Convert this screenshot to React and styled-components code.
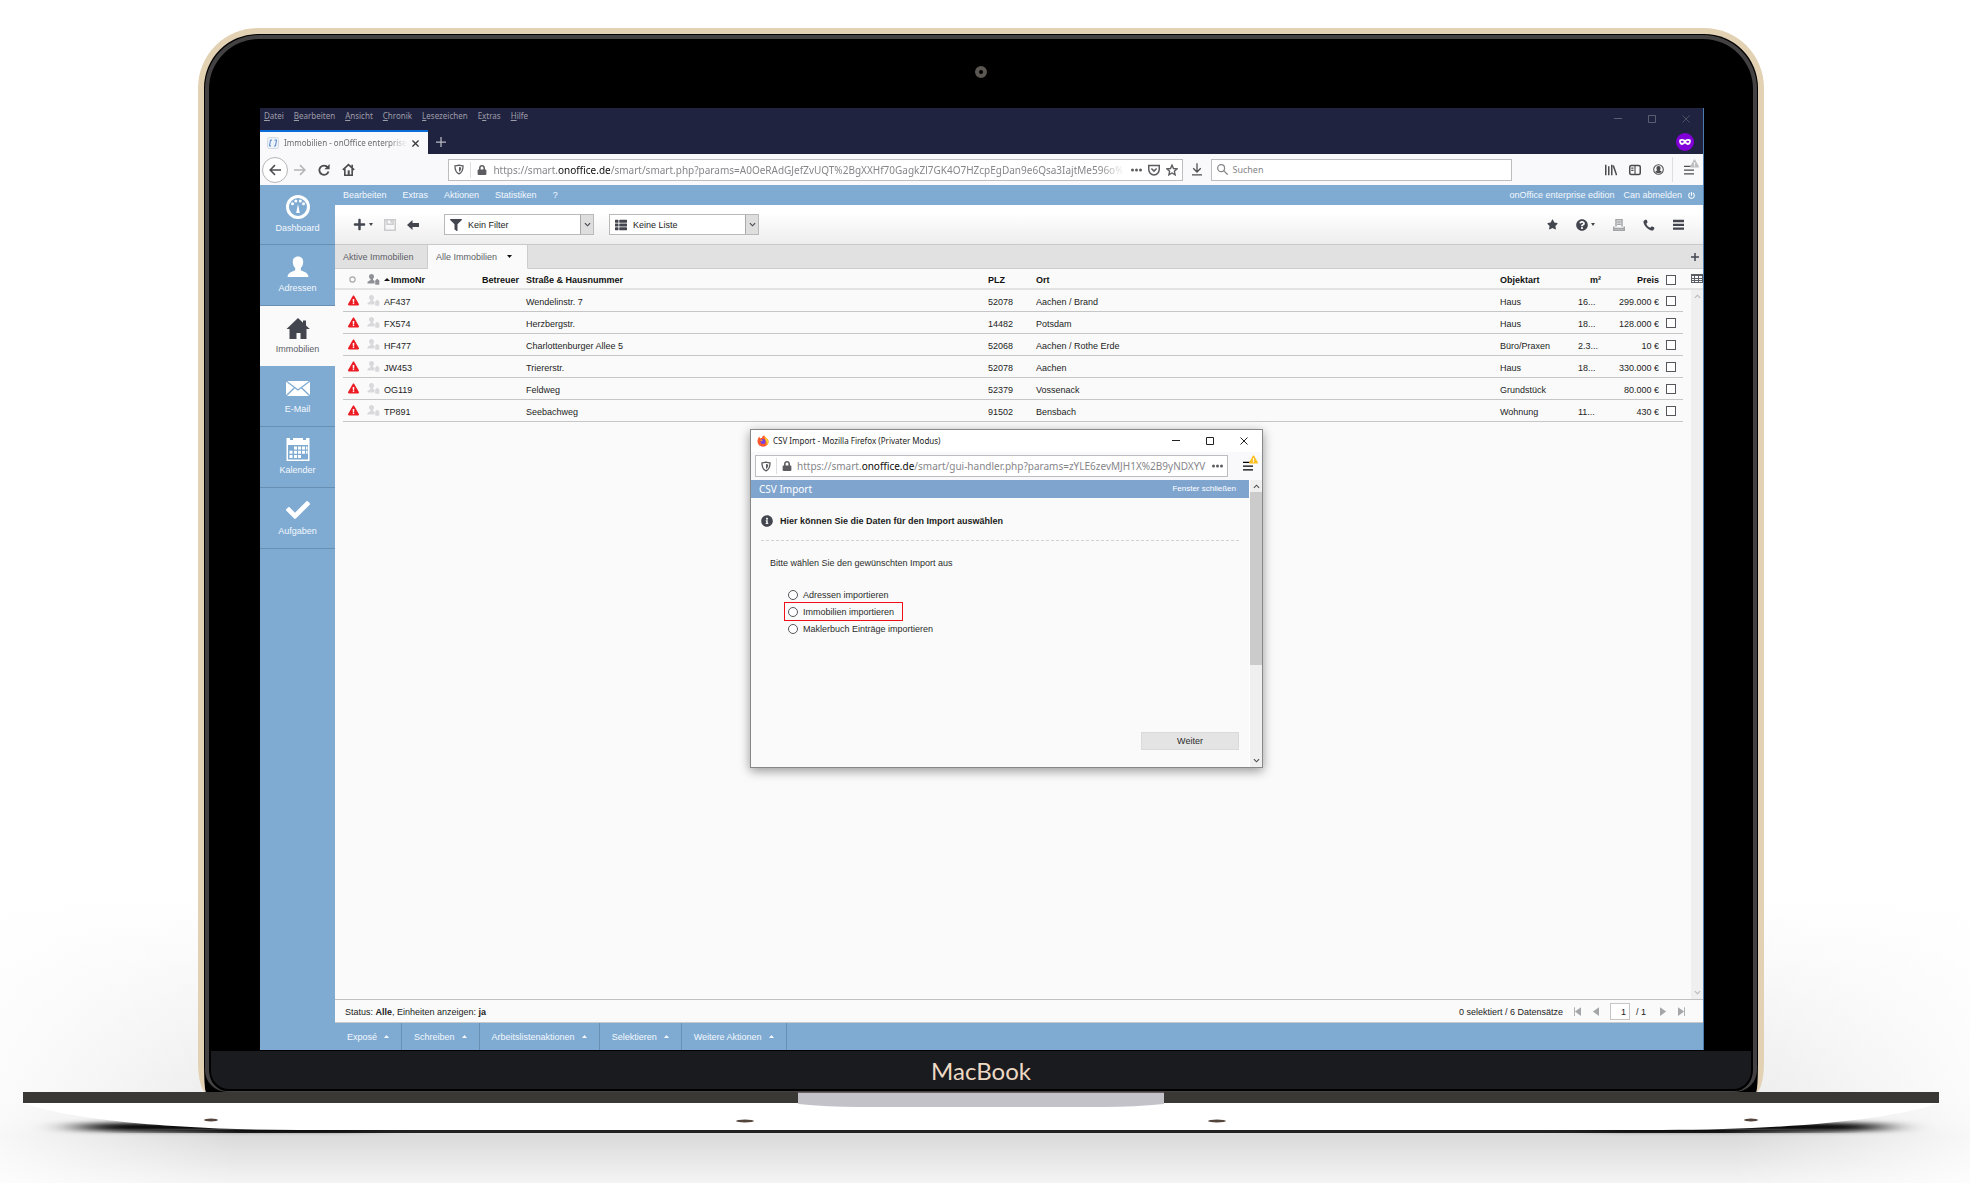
import styled, { createGlobalStyle, css } from "styled-components"
import {
   FaCheck,
   FaExclamationTriangle,
   FaFilter,
   FaInfoCircle,
   FaLock,
   FaPlus,
   FaPowerOff,
   FaQuestionCircle,
   FaStar,
   FaThList,
} from "react-icons/fa"

const colors = {
   blue: "#7fabd3",
   blueLine: "#6890b5",
   navy: "#20233f",
   dark: "#43464f",
   panel: "#fafafa",
   chrome: "#f9f9fb",
   line: "#c6c6c6",
   gold: "#e2d2b3",
}
const fonts = {
   app: `"Liberation Sans", Arial, sans-serif`,
   system: `"Noto Sans", "Open Sans", sans-serif`,
}

const GlobalStyle = createGlobalStyle`
   * {
      box-sizing: border-box;
   }
   body {
      margin: 0;
      background: #fff;
      font-family: ${fonts.app};
      font-size: 9px;
      line-height: 12px;
   }
   button, input, select {
      font: inherit;
      color: inherit;
      margin: 0;
   }
   svg {
      display: block;
      flex: none;
   }
`
const bareButton = css`
   border: 0;
   padding: 0;
   background: none;
   display: flex;
   align-items: center;
   justify-content: center;
   cursor: pointer;
`

/* ---------- laptop ---------- */
const Page = styled.div`
   min-height: 100vh;
   display: flex;
   flex-direction: column;
   padding-top: 28px;
   background:
      linear-gradient(90deg, rgba(255, 255, 255, 0.8), transparent 12%, transparent 88%, rgba(255, 255, 255, 0.8)),
      linear-gradient(#fff 76%, #ececec 93%, #e4e4e4 95%, #dadada 96%, #f4f4f4);
`
const Lid = styled.div`
   flex: 1;
   display: flex;
   flex-direction: column;
   margin: 0 206px 0 198px;
   padding: 1px 1px 0;
   border: 6px solid ${colors.gold};
   border-bottom: 0;
   border-radius: 60px 60px 8px 8px / 60px 60px 30px 30px;
   background: #000;
`
const Bezel = styled.div`
   flex: 1;
   display: flex;
   flex-direction: column;
   border: 4px solid #434142;
   border-bottom-width: 1px;
   border-radius: 54px 54px 22px 22px;
   background: #000;
`
const CameraBar = styled.div`
   height: 69px;
   padding-bottom: 3px;
   display: flex;
   align-items: center;
   justify-content: center;
`
const Camera = styled.div`
   width: 12px;
   height: 12px;
   border: 4px solid #5b5753;
   border-radius: 50%;
`
const Screen = styled.main`
   flex: 1;
   display: flex;
   flex-direction: column;
   position: relative;
   margin: 0 49px 0 51px;
   border-right: 1px solid #4a7cae;
   background: ${colors.panel};
`
const Chin = styled.div`
   height: 38px;
   margin: 1px 2px 2px;
   padding-top: 2px;
   display: flex;
   align-items: center;
   justify-content: center;
   border-radius: 0 0 18px 18px;
   background: #1a1b1f;
   color: #eed9c4;
   font-family: Lato, sans-serif;
   font-size: 24px;
   line-height: 30px;
`
const BaseDrawing = styled.svg`
   width: 100%;
   height: 91px;
`

/* ---------- browser ---------- */
const TitleArea = styled.header`
   height: 46px;
   display: flex;
   justify-content: space-between;
   background: ${colors.navy};
   font-family: ${fonts.system};
   font-size: 8px;
`
const TitleLeft = styled.div`
   display: flex;
   flex-direction: column;
   justify-content: space-between;
`
const MenuBar = styled.nav`
   display: flex;
   gap: 10px;
   padding: 2px 4px 0;
   color: #9d9ca9;
`
const MenuButton = styled.button`
   ${bareButton}
   white-space: pre;
`
const TabRow = styled.div`
   display: flex;
   align-items: center;
   gap: 8px;
   color: #b9bac4;
`
const BrowserTab = styled.div`
   width: 168px;
   height: 24px;
   display: flex;
   align-items: center;
   gap: 5px;
   padding: 0 9px 0 7px;
   border-top: 2px solid #0a6cd6;
   background: ${colors.chrome};
   color: #6b6b70;
`
const TabTitle = styled.span`
   flex: 1;
   overflow: hidden;
   white-space: nowrap;
   mask-image: linear-gradient(90deg, #000 85%, transparent);
`
const TitleRight = styled.div`
   display: flex;
   flex-direction: column;
   align-items: flex-end;
   justify-content: space-between;
   padding: 7px 9px 3px 0;
   color: #5b5d70;
`
const WindowButtons = styled.div`
   display: flex;
   align-items: center;
   gap: 26px;
   padding-right: ${(p) => p.$end}px;
`
const NavBar = styled.div`
   height: 31px;
   display: flex;
   align-items: center;
   padding: 0 4px 0 2px;
   background: ${colors.chrome};
   color: #4c4c50;
`
const NavGroup = styled.div`
   display: flex;
   align-items: center;
   gap: ${(p) => p.$gap}px;
`
const BackButton = styled.button`
   ${bareButton}
   width: 26px;
   height: 26px;
   border: 1px solid #b5b5b8;
   border-radius: 50%;
   background: #fff;
`
const IconButton = styled.button`
   ${bareButton}
   color: ${(p) => p.$color || "inherit"};
`
const DownloadButton = styled(IconButton)`
   padding: 0 9px;
`
const Spacer = styled.div`
   flex: 1 1 93px;
`
const AddressField = styled.div`
   flex: ${(p) => p.$flex || "8 1 732px"};
   min-width: 0;
   height: 22px;
   display: flex;
   align-items: center;
   gap: 6px;
   padding: 0 4px 0 5px;
   border: 1px solid #bdbdc0;
   background: #fff;
   color: #5c5c60;
`
const DialogAddress = styled(AddressField)`
   gap: 5px;
`
const AddressText = styled.div`
   flex: 1;
   min-width: 0;
   overflow: hidden;
   white-space: nowrap;
   font-family: ${fonts.system};
   font-size: 10px;
   line-height: 16px;
   color: #86868a;
   mask-image: ${(p) => (p.$fade ? "linear-gradient(90deg, #000 96%, transparent)" : "none")};
   & b {
      font-weight: 400;
      color: #0c0c0d;
   }
`
const Divider = styled.i`
   width: 1px;
   height: ${(p) => p.$height}px;
   background: #dedee0;
`
const SearchField = styled.label`
   flex: 3 1 299px;
   min-width: 0;
   height: 22px;
   display: flex;
   align-items: center;
   gap: 4px;
   padding: 0 5px;
   border: 1px solid #bdbdc0;
   background: #fff;
   color: #85858a;
   font-family: ${fonts.system};
   & input {
      width: 100%;
      border: 0;
      padding: 0;
      background: none;
      outline: 0;
   }
   & input::placeholder {
      color: #85858a;
   }
`
const MenuWithBadge = styled.button`
   ${bareButton}
   position: relative;
   width: 20px;
   height: 22px;
`
const WarnBadge = styled(FaExclamationTriangle)`
   position: absolute;
   top: 0;
   right: 0;
   color: ${(p) => p.$color};
`

/* ---------- application ---------- */
const AppArea = styled.div`
   flex: 1;
   display: flex;
`
const Sidebar = styled.nav`
   width: 75px;
   background: ${colors.blue};
`
const SideLink = styled.a`
   height: ${(p) => (p.$active ? 60 : 61)}px;
   display: flex;
   flex-direction: column;
   align-items: center;
   gap: 3px;
   padding-top: 10px;
   border-bottom: 1px solid ${(p) => (p.$active ? colors.panel : colors.blueLine)};
   background: ${(p) => (p.$active ? colors.panel : "transparent")};
   color: ${(p) => (p.$active ? "#5c5e66" : "#f4f8fc")};
   text-decoration: none;
   &:first-child {
      height: 60px;
   }
   & svg {
      width: 24px;
      height: 24px;
      color: ${(p) => (p.$active ? colors.dark : "#fff")};
   }
`
const Content = styled.section`
   flex: 1;
   min-width: 0;
   display: flex;
   flex-direction: column;
`
const AppMenu = styled.div`
   height: 20px;
   display: flex;
   align-items: center;
   gap: 16px;
   padding: 0 8px;
   background: ${colors.blue};
   color: #f4f8fc;
`
const MenuEnd = styled.div`
   margin-left: auto;
   display: flex;
   align-items: center;
   gap: 9px;
`
const LogoutButton = styled(MenuButton)`
   gap: 6px;
`
const Toolbar = styled.div`
   height: 39px;
   display: flex;
   align-items: center;
   justify-content: space-between;
   padding: 0 19px 0 18px;
   background: linear-gradient(#fff 20%, #ededed);
   color: ${colors.dark};
`
const ToolGroup = styled.div`
   display: flex;
   align-items: center;
   gap: ${(p) => p.$gap}px;
`
const CaretButton = styled(IconButton)`
   gap: 3px;
`
const SelectBox = styled.label`
   width: 150px;
   height: 21px;
   display: flex;
   align-items: center;
   gap: 6px;
   padding-left: 5px;
   border: 1px solid #b9b9b9;
   background: #fff;
   & select {
      flex: 1;
      min-width: 0;
      border: 0;
      padding: 0;
      appearance: none;
      background: none;
      color: #1d1d1d;
   }
`
const SelectArrow = styled.span`
   width: 13px;
   height: 19px;
   display: flex;
   align-items: center;
   justify-content: center;
   border-left: 1px solid #a9a9a9;
   background: #dedede;
`
const ViewTabs = styled.div`
   height: 25px;
   display: flex;
   border-top: 1px solid #c9c9c9;
   background: #e1e1e1;
   color: ${colors.dark};
`
const ViewTab = styled.button`
   ${bareButton}
   gap: 10px;
   width: ${(p) => (p.$active ? 100 : 93)}px;
   justify-content: flex-start;
   padding: 0 8px;
   border-right: 1px solid #cdcdcd;
   border-bottom: 1px solid ${(p) => (p.$active ? colors.panel : "#cdcdcd")};
   background: ${(p) => (p.$active ? colors.panel : "transparent")};
   color: #5c5e66;
   & svg {
      color: #111;
   }
`
const ViewTabsEnd = styled.div`
   flex: 1;
   display: flex;
   align-items: center;
   justify-content: flex-end;
   padding-right: 4px;
   border-bottom: 1px solid #cdcdcd;
`
const ListArea = styled.div`
   flex: 1;
   display: flex;
   background: linear-gradient(#e3e3e3, #e3e3e3) 0 19px / 100% 2px no-repeat ${colors.panel};
`
const TableWrap = styled.div`
   flex: 1;
   min-width: 0;
   padding: 0 8px;
`
const Table = styled.table`
   width: 100%;
   table-layout: fixed;
   border-collapse: separate;
   border-spacing: 0;
   color: #1d1d1d;
   & th {
      height: 21px;
      padding: 0;
      text-align: left;
      color: #111;
   }
   & td {
      height: 22px;
      padding: 2px 0 0;
      border-bottom: 1px solid ${colors.line};
   }
   & th,
   & td {
      white-space: nowrap;
   }
`
const Cell = styled.td`
   && {
      text-align: ${(p) => (p.$end ? "right" : "left")};
      padding-left: ${(p) => p.$pad || 0}px;
   }
`
const IconCell = styled(Cell)`
   && {
      padding-top: 0;
   }
`
const HeadCell = styled(Cell).attrs({ as: "th", scope: "col" })``
const SortLabel = styled.span`
   display: flex;
   align-items: center;
   gap: 1px;
`
const Tick = styled.input.attrs({ type: "checkbox" })`
   && {
      display: block;
      width: 10px;
      height: 10px;
      appearance: none;
      border: 1px solid #55575c;
      background: #fff;
   }
   &&:checked {
      background: ${colors.dark};
   }
`
const ListSide = styled.div`
   width: 12px;
   display: flex;
   flex-direction: column;
`
const ColumnsButton = styled.button`
   ${bareButton}
   height: 19px;
   margin-bottom: 2px;
   color: #5c5e66;
`
const ScrollTrack = styled.div`
   flex: 1;
   display: flex;
   flex-direction: column;
   justify-content: space-between;
   align-items: center;
   padding: 4px 0;
   background: #efefef;
   color: #b8b8b8;
`
const DialogScroll = styled(ScrollTrack)`
   flex: 0 0 13px;
   border-left: 1px solid #fff;
   color: #505050;
`
const ScrollThumb = styled.i`
   width: 100%;
   height: 173px;
   margin: 3px 0 auto;
   background: #cbcbcb;
`
const StatusBar = styled.div`
   height: 24px;
   display: flex;
   align-items: center;
   justify-content: space-between;
   padding: 1px 18px 0 10px;
   border-top: 1px solid #c0c0c0;
   border-bottom: 1px solid #c9c9c9;
   background: ${colors.panel};
   color: #222;
`
const Pager = styled.div`
   display: flex;
   align-items: center;
   gap: 11px;
   color: #222;
   & input {
      width: 20px;
      height: 17px;
      padding: 0 3px 0 0;
      border: 1px solid #c6c6c6;
      background: #fff;
      text-align: right;
   }
`
const PagerField = styled.label`
   display: flex;
   align-items: center;
   gap: 6px;
   margin-right: 3px;
`
const Footer = styled.footer`
   height: 27px;
   display: flex;
   background: ${colors.blue};
   color: #f4f8fc;
`
const FooterButton = styled.button`
   ${bareButton}
   gap: 7px;
   padding: 0 12px;
   border-right: 1px solid ${colors.blueLine};
`

/* ---------- import window ---------- */
const Dialog = styled.section`
   position: absolute;
   top: 321px;
   left: 490px;
   width: 513px;
   height: 339px;
   display: flex;
   flex-direction: column;
   border: 1px solid #86888a;
   background: ${colors.panel};
   box-shadow: 0 3px 10px rgba(0, 0, 0, 0.4);
`
const DialogTitle = styled.header`
   height: 22px;
   display: flex;
   align-items: center;
   gap: 4px;
   padding-left: 6px;
   background: #fff;
   color: #222;
   font-family: ${fonts.system};
   font-size: 8px;
   & h1 {
      flex: 1;
      margin: 0;
      font-size: inherit;
      font-weight: 400;
   }
`
const DialogNav = styled.div`
   height: 28px;
   display: flex;
   align-items: center;
   gap: 10px;
   padding: 0 4px;
   background: ${colors.chrome};
`
const DialogMain = styled.div`
   flex: 1;
   display: flex;
   min-height: 0;
`
const DialogForm = styled.form`
   flex: 1;
   display: flex;
   flex-direction: column;
`
const DialogHeading = styled.div`
   height: 18px;
   display: flex;
   align-items: center;
   justify-content: space-between;
   padding: 0 13px 0 8px;
   background: #7fa5cf;
   color: #fff;
   font-size: 8px;
   & h2 {
      margin: 0;
      font-family: ${fonts.system};
      font-weight: 400;
      font-size: 10px;
   }
   & a {
      color: inherit;
      text-decoration: none;
   }
`
const Hint = styled.div`
   height: 43px;
   display: flex;
   align-items: center;
   gap: 7px;
   margin: 0 10px;
   padding-top: 3px;
   border-bottom: 1px dashed #d2d2d2;
   color: ${colors.dark};
   & strong {
      color: #1a1a1a;
   }
`
const Choices = styled.fieldset`
   flex: 1;
   display: flex;
   flex-direction: column;
   align-items: flex-start;
   margin: 0;
   padding: 16px 0 0 33px;
   border: 0;
   color: #2c2c2c;
   & legend {
      padding: 16px 0 0;
      margin-left: -14px;
   }
`
const Choice = styled.label`
   height: 19px;
   display: flex;
   align-items: center;
   gap: 5px;
   margin-bottom: -2px;
   padding: 0 8px 0 3px;
   border: 1px solid ${(p) => (p.$marked ? "#f00f17" : "transparent")};
   & input {
      width: 10px;
      height: 10px;
      appearance: none;
      border: 1px solid #55575c;
      border-radius: 50%;
      background: #fff;
   }
   & input:checked {
      border-width: 4px;
   }
`
const SubmitButton = styled.button`
   align-self: flex-end;
   width: 98px;
   height: 18px;
   margin: 0 10px 17px 0;
   border: 1px solid #dadada;
   background: #e4e4e4;
   color: #2c2c2c;
`

/* ---------- icons ---------- */
const Line = ({ w = 12, h = w, box = "0 0 16 16", sw = 2, children }) => (
   <svg width={w} height={h} viewBox={box} fill="none" stroke="currentColor" strokeWidth={sw} aria-hidden="true">
      {children}
   </svg>
)
const Close = ({ size = 8, sw = 2 }) => (
   <Line w={size} sw={sw}>
      <path d="M1 1l14 14M15 1L1 15" />
   </Line>
)
const Maximize = () => (
   <Line w={8}>
      <path d="M1 1h14v14H1z" />
   </Line>
)
const Minimize = () => (
   <Line w={8}>
      <path d="M0 7h16" />
   </Line>
)
const Shield = () => (
   <Line w={10} h={11}>
      <path d="M8 1c2 .6 4 1 6.500 1C14.500 9 13 13 8 15 3 13 1.500 9 1.500 2 4 2 6 1.600 8 1z" />
      <path d="M8 4c1 .4 2.300.6 3.500.7-.2 4-1.200 6-3.500 7.300z" fill="currentColor" stroke="none" />
   </Line>
)
const Dots = () => (
   <svg width="11" height="4" viewBox="0 0 11 4" fill="currentColor" aria-hidden="true">
      <circle cx="1.500" cy="2" r="1.500" />
      <circle cx="5.500" cy="2" r="1.500" />
      <circle cx="9.500" cy="2" r="1.500" />
   </svg>
)
const Hamburger = () => (
   <Line w={10}>
      <path d="M0 2h16M0 8h16M0 14h16" />
   </Line>
)
const Caret = ({ up, w = 5 }) => (
   <svg width={w} height="3" viewBox="0 0 6 4" preserveAspectRatio="none" fill="currentColor" aria-hidden="true">
      <path d={up ? "M0 4l3-4 3 4z" : "M0 0h6l-3 4z"} />
   </svg>
)
const Chevron = ({ up }) => (
   <Line w={7} h={5} box="0 0 8 5" sw={1.3}>
      <path d={up ? "M1 4l3-3 3 3" : "M1 1l3 3 3-3"} />
   </Line>
)
const PageArrow = ({ back, stop }) => (
   <svg width="7" height="9" viewBox="0 0 8 10" fill="#a4a6a9" aria-hidden="true">
      <path d={back ? "M8 0v10L1 5z" : "M0 0v10l7-5z"} />
      {stop && <path d={back ? "M0 0h1v10H0z" : "M7 0h1v10H7z"} />}
   </svg>
)
const PersonHouse = ({ color = "#d9d9dc" }) => (
   <svg width="13" height="11" viewBox="0 0 26 22" fill={color} aria-hidden="true">
      <path d="M9 0c3 0 5 2 5 5 0 2-1 4-2 5v2l3 1.500V19H1v-3c1-2 4-2 6-4v-2C5 9 4 7 4 5c0-3 2-5 5-5z" />
      <path d="M20.500 9l5.500 6h-1.500v6.500h-8V15H15z" />
   </svg>
)
const ColumnsIcon = () => (
   <svg width="12" height="9" viewBox="0 0 12 9" fill="currentColor" aria-hidden="true">
      <path d="M0 0h12v9H0zM1 2v2h2V2zM4 2v2h3V2zM8 2v2h3V2zM1 5v1h2V5zM4 5v1h3V5zM8 5v1h3V5zM1 7v1h2V7zM4 7v1h3V7zM8 7v1h3V7z" fillRule="evenodd" />
   </svg>
)
const DashboardIcon = () => (
   <svg viewBox="0 0 24 24" fill="currentColor" aria-hidden="true">
      <circle cx="12" cy="12" r="10.500" fill="none" stroke="currentColor" strokeWidth="3" />
      <circle cx="6.500" cy="8.800" r="1.500" />
      <circle cx="9.800" cy="6" r="1.500" />
      <circle cx="14.300" cy="6" r="1.500" />
      <circle cx="17.500" cy="8.800" r="1.500" />
      <path d="M12 9l1.800 9h-3.600z" />
   </svg>
)
const PersonIcon = () => (
   <svg viewBox="0 0 24 24" fill="currentColor" aria-hidden="true">
      <path d="M12 1.500c3.500 0 5.200 2.300 5.200 5.500 0 2.500-1 4.500-2.400 6v2.300c2.500 1.200 7 2 7.700 6.700h-21c.7-4.700 5.200-5.500 7.700-6.700V13C7.800 11.500 6.800 9.500 6.800 7c0-3.200 1.700-5.500 5.200-5.500z" />
   </svg>
)
const HouseIcon = () => (
   <svg viewBox="0 0 24 24" fill="currentColor" aria-hidden="true">
      <path d="M12 2l5 4.700V4.500h3v5l3.800 3.600H20.500V23h-6v-6h-4v6h-7v-9.900H.5z" />
   </svg>
)
const MailIcon = () => (
   <svg viewBox="0 0 24 24" aria-hidden="true">
      <path d="M0 5h24v15H0z" fill="currentColor" />
      <path d="M0 5l12 9 12-9M0 20l8.500-8.300M24 20l-8.500-8.300" fill="none" stroke={colors.blue} strokeWidth="1.300" />
   </svg>
)
const CalendarIcon = () => (
   <svg viewBox="0 0 24 24" fill="currentColor" aria-hidden="true">
      <path d="M.5 1H4v2h3V1h10v2h3V1h3.500v23H.5zM2 8v14.500h20V8z" fillRule="evenodd" />
      {[8, 12, 16].map((x) => (
         <path key={x} d={`M${x} 9.500h3v3h-3zM${x} 13.700h3v3h-3z`} />
      ))}
      <path d="M20 9.500h1.500v3H20zM20 13.700h1.500v3H20zM3.500 13.700h3v3h-3zM3.500 18h3v3h-3zM8 18h3v3H8zM12 18h3v3h-3z" />
   </svg>
)
const HomeOutline = () => (
   <Line w={13}>
      <path d="M1 8.500L8 2l7 6.500M3.500 7v8h9V7" />
      <path d="M7 9h2.500v6H7z" fill="currentColor" stroke="none" />
      <path d="M12.500 5.500V2" />
   </Line>
)
const FirefoxLogo = () => (
   <svg width="12" height="12" viewBox="0 0 24 24" aria-hidden="true">
      <path d="M12 23C5.500 23 1 18.500 1 12.500 1 8 3 5 5 3c0 2 .5 3 1.500 4 1-.7 2-1 3.500-1 .5-2.500 2-4.500 4.500-5.500 0 2.500 2 3.500 4 5.500 2.500 1.500 4.500 4 4.500 7.500C23 19 18 23 12 23z" fill="#ff5a2a" />
      <path d="M14.500.5c0 2.500 2 3.500 4 5.500 2.500 1.500 4.500 4 4.500 7.500 0 3-1.500 5.500-3.500 7.200C20 13 15 9 14.500.5z" fill="#ffc72e" />
      <path d="M3 16c2 5 7 7.500 12 6.500-3 .8-10 1-12-6.500z" fill="#e31587" />
      <circle cx="12" cy="13" r="5" fill="#7542e5" />
      <path d="M6.500 10c2-1 4-.5 6 .5-2 .2-2.500 1.500-4 2.500z" fill="#ff9a2a" />
   </svg>
)

/* ---------- data ---------- */
const browserMenu = [
   ["", "D", "atei"],
   ["", "B", "earbeiten"],
   ["", "A", "nsicht"],
   ["", "C", "hronik"],
   ["", "L", "esezeichen"],
   ["E", "x", "tras"],
   ["", "H", "ilfe"],
]
const sideItems = [
   { label: "Dashboard", Icon: DashboardIcon },
   { label: "Adressen", Icon: PersonIcon },
   { label: "Immobilien", Icon: HouseIcon, active: true },
   { label: "E-Mail", Icon: MailIcon },
   { label: "Kalender", Icon: CalendarIcon },
   { label: "Aufgaben", Icon: FaCheck },
]
const estates = [
   { nr: "AF437", street: "Wendelinstr. 7", zip: "52078", city: "Aachen / Brand", type: "Haus", area: "16...", price: "299.000 €" },
   { nr: "FX574", street: "Herzbergstr.", zip: "14482", city: "Potsdam", type: "Haus", area: "18...", price: "128.000 €" },
   { nr: "HF477", street: "Charlottenburger Allee 5", zip: "52068", city: "Aachen / Rothe Erde", type: "Büro/Praxen", area: "2.3...", price: "10 €" },
   { nr: "JW453", street: "Triererstr.", zip: "52078", city: "Aachen", type: "Haus", area: "18...", price: "330.000 €" },
   { nr: "OG119", street: "Feldweg", zip: "52379", city: "Vossenack", type: "Grundstück", area: "", price: "80.000 €" },
   { nr: "TP891", street: "Seebachweg", zip: "91502", city: "Bensbach", type: "Wohnung", area: "11...", price: "430 €" },
]
const columnWidths = [24, 17, 60, 75, "35%", 48, undefined, 78, 23, 58, 24]
const importKinds = ["Adressen importieren", "Immobilien importieren", "Maklerbuch Einträge importieren"]
const footerActions = ["Exposé", "Schreiben", "Arbeitslistenaktionen", "Selektieren", "Weitere Aktionen"]

function BrowserChrome() {
   return (
      <>
         <TitleArea>
            <TitleLeft>
               <MenuBar>
                  {browserMenu.map(([before, key, after]) => (
                     <MenuButton key={after}>
                        {before}
                        <u>{key}</u>
                        {after}
                     </MenuButton>
                  ))}
               </MenuBar>
               <TabRow>
                  <BrowserTab>
                     <svg width="12" height="12" viewBox="0 0 24 24" aria-hidden="true">
                        <rect x="1" y="1" width="22" height="22" rx="4" fill="#eef3fa" stroke="#d3d9e2" strokeWidth="2" />
                        <path d="M10 6H7L5 18h3M15 6h4l-2 12h-3" fill="none" stroke="#4f86c6" strokeWidth="2" />
                     </svg>
                     <TabTitle>Immobilien - onOffice enterprise</TabTitle>
                     <IconButton aria-label="Tab schließen" $color="#3a3a3e">
                        <Close size={7} sw={3} />
                     </IconButton>
                  </BrowserTab>
                  <IconButton aria-label="Neuer Tab">
                     <Line w={10}>
                        <path d="M8 0v16M0 8h16" />
                     </Line>
                  </IconButton>
               </TabRow>
            </TitleLeft>
            <TitleRight>
               <WindowButtons $end={4}>
                  <IconButton aria-label="Minimieren">
                     <Minimize />
                  </IconButton>
                  <IconButton aria-label="Maximieren">
                     <Maximize />
                  </IconButton>
                  <IconButton aria-label="Schließen">
                     <Close sw={1.5} />
                  </IconButton>
               </WindowButtons>
               <svg width="18" height="18" viewBox="0 0 36 36" aria-hidden="true">
                  <circle cx="18" cy="18" r="18" fill="#8000d7" />
                  <path d="M7 13c4-2 8-1 11 1 3-2 7-3 11-1 2 5-1 11-5 11-3 0-4-3-6-3s-3 3-6 3c-4 0-7-6-5-11z" fill="#fff" />
                  <ellipse cx="12.500" cy="17.500" rx="3" ry="2" fill="#8000d7" />
                  <ellipse cx="23.500" cy="17.500" rx="3" ry="2" fill="#8000d7" />
               </svg>
            </TitleRight>
         </TitleArea>
         <NavBar>
            <NavGroup $gap={6}>
               <BackButton aria-label="Zurück">
                  <Line w={12}>
                     <path d="M16 8H2M8 1.500L1.500 8 8 14.500" />
                  </Line>
               </BackButton>
               <NavGroup $gap={12}>
                  <IconButton aria-label="Vor" $color="#b4b4b6">
                     <Line w={12}>
                        <path d="M0 8h14M8 1.500L14.500 8 8 14.500" />
                     </Line>
                  </IconButton>
                  <IconButton aria-label="Neu laden">
                     <Line w={12} sw={2.4}>
                        <path d="M13 4.500A6.200 6.200 0 1 0 14 10" />
                        <path d="M15.500 0v7h-7z" fill="currentColor" stroke="none" />
                     </Line>
                  </IconButton>
                  <IconButton aria-label="Startseite">
                     <HomeOutline />
                  </IconButton>
               </NavGroup>
            </NavGroup>
            <Spacer />
            <AddressField>
               <Shield />
               <Divider $height={16} />
               <FaLock size={10} />
               <AddressText $fade>
                  https://smart.<b>onoffice.de</b>
                  /smart/smart.php?params=A0OeRAdGJefZvUQT%2BgXXHf70GagkZl7GK4O7HZcpEgDan9e6Qsa3IajtMe596o%
               </AddressText>
               <Dots />
               <Line>
                  <path d="M1 2h14v5c0 4-3 7.500-7 7.500S1 11 1 7z" />
                  <path d="M4.500 6L8 9.500 11.500 6" />
               </Line>
               <Line sw={1.8}>
                  <path d="M8 1.500l2 4.500 4.800.5-3.600 3.200 1 4.800L8 12l-4.200 2.500 1-4.800L1.200 6.500 6 6z" />
               </Line>
            </AddressField>
            <DownloadButton aria-label="Downloads">
               <Line w={10} h={13} box="0 0 16 20">
                  <path d="M8 0v13M2 8l6 6 6-6M0 18.500h16" />
               </Line>
            </DownloadButton>
            <SearchField>
               <Line w={11} sw={1.8}>
                  <circle cx="6" cy="6" r="5" />
                  <path d="M10 10l5.500 5.500" />
               </Line>
               <input type="text" aria-label="Suchen" placeholder="Suchen" />
            </SearchField>
            <Spacer />
            <NavGroup $gap={8}>
               <NavGroup $gap={12}>
                  <IconButton aria-label="Bibliothek">
                     <Line>
                        <path d="M1 1v14M5 3v12M9 1v14M11 2l4.500 13" />
                     </Line>
                  </IconButton>
                  <IconButton aria-label="Seitenleiste">
                     <Line>
                        <rect x="1" y="2" width="14" height="12" rx="2" />
                        <path d="M8 2v12M3 5.500h3M3 8.500h3" strokeWidth="1.500" />
                     </Line>
                  </IconButton>
                  <IconButton aria-label="Konto">
                     <Line w={11} sw={1.5}>
                        <circle cx="8" cy="8" r="7" />
                        <path d="M8 3c2 0 3 1.300 3 3s-1 3-1.500 3.500c2 .5 3 1 3 2C11 13.500 5 13.500 3.500 11.500c0-1 1-1.500 3-2C6 9 5 7.700 5 6s1-3 3-3z" fill="currentColor" stroke="none" />
                     </Line>
                  </IconButton>
               </NavGroup>
               <NavGroup $gap={6}>
                  <Divider $height={25} />
                  <MenuWithBadge aria-label="Menü">
                     <Hamburger />
                     <WarnBadge size={9} $color="#bdbdc0" />
                  </MenuWithBadge>
               </NavGroup>
            </NavGroup>
         </NavBar>
      </>
   )
}

function SelectField({ icon, label }) {
   return (
      <SelectBox>
         {icon}
         <select aria-label={label}>
            <option>{label}</option>
         </select>
         <SelectArrow>
            <Chevron />
         </SelectArrow>
      </SelectBox>
   )
}

function AppToolbar() {
   return (
      <Toolbar>
         <ToolGroup $gap={25}>
            <ToolGroup $gap={11}>
               <CaretButton aria-label="Neu">
                  <FaPlus size={13} />
                  <Caret w={4} />
               </CaretButton>
               <IconButton aria-label="Speichern" $color="#cbcbce">
                  <Line>
                     <path d="M1 1h14v14H1zM4 1v6h8V1M9.500 2v3" />
                  </Line>
               </IconButton>
               <IconButton aria-label="Zurück">
                  <svg width="12" height="10" viewBox="0 0 24 20" fill="currentColor">
                     <path d="M0 10L11 0v6h13v8H11v6z" />
                  </svg>
               </IconButton>
            </ToolGroup>
            <ToolGroup $gap={15}>
               <SelectField icon={<FaFilter size={12} />} label="Kein Filter" />
               <SelectField icon={<FaThList size={12} />} label="Keine Liste" />
            </ToolGroup>
         </ToolGroup>
         <ToolGroup $gap={18}>
            <IconButton aria-label="Favoriten">
               <FaStar size={11} />
            </IconButton>
            <CaretButton aria-label="Hilfe">
               <FaQuestionCircle size={12} />
               <Caret w={4} />
            </CaretButton>
            <IconButton aria-label="Drucken" $color="#a3a4a8">
               <Line>
                  <path d="M4 10V1h8v9M5.500 4h5M5.500 7h5M1 10v5h14v-5M1 12.500h14" />
               </Line>
            </IconButton>
            <IconButton aria-label="Telefon">
               <svg width="12" height="12" viewBox="0 0 24 24" fill="currentColor">
                  <path d="M2 3l4-2c2 1 3 4 3 6L6.500 9.500c1.500 4 4 6.500 8 8L17 15c2 0 5 1 6 3l-2 4c-2 2-6 1-9-1C6 17.500 2 12 1 7c0-2 0-3 1-4z" />
               </svg>
            </IconButton>
            <IconButton aria-label="Menü">
               <Line w={11} sw={3.5}>
                  <path d="M0 3h16M0 8.500h16M0 14h16" />
               </Line>
            </IconButton>
         </ToolGroup>
      </Toolbar>
   )
}

function EstateTable() {
   return (
      <Table>
         <colgroup>
            {columnWidths.map((width, i) => (
               <col key={i} width={width} />
            ))}
         </colgroup>
         <thead>
            <tr>
               <HeadCell $pad={6}>
                  <svg width="7" height="7" viewBox="0 0 16 16" fill="none" stroke="#a4a6a9" strokeWidth="2.500">
                     <circle cx="8" cy="8" r="6" />
                  </svg>
               </HeadCell>
               <HeadCell>
                  <PersonHouse color="#8e9095" />
               </HeadCell>
               <HeadCell>
                  <SortLabel>
                     <Caret up w={6} />
                     ImmoNr
                  </SortLabel>
               </HeadCell>
               <HeadCell $end>Betreuer</HeadCell>
               <HeadCell $pad={7}>Straße &amp; Hausnummer</HeadCell>
               <HeadCell>PLZ</HeadCell>
               <HeadCell>Ort</HeadCell>
               <HeadCell>Objektart</HeadCell>
               <HeadCell $end>m²</HeadCell>
               <HeadCell $end>Preis</HeadCell>
               <HeadCell $pad={7}>
                  <Tick aria-label="Alle auswählen" />
               </HeadCell>
            </tr>
         </thead>
         <tbody>
            {estates.map((e) => (
               <tr key={e.nr}>
                  <IconCell $pad={5}>
                     <FaExclamationTriangle size={11} color="#ec1c24" />
                  </IconCell>
                  <IconCell>
                     <PersonHouse />
                  </IconCell>
                  <Cell>{e.nr}</Cell>
                  <Cell />
                  <Cell $pad={7}>{e.street}</Cell>
                  <Cell>{e.zip}</Cell>
                  <Cell>{e.city}</Cell>
                  <Cell>{e.type}</Cell>
                  <Cell>{e.area}</Cell>
                  <Cell $end>{e.price}</Cell>
                  <IconCell $pad={7}>
                     <Tick aria-label={`${e.nr} auswählen`} />
                  </IconCell>
               </tr>
            ))}
         </tbody>
      </Table>
   )
}

function ImportDialog() {
   return (
      <Dialog role="dialog" aria-label="CSV Import">
         <DialogTitle>
            <FirefoxLogo />
            <h1>CSV Import - Mozilla Firefox (Privater Modus)</h1>
            <WindowButtons $end={14}>
               <IconButton aria-label="Minimieren">
                  <Minimize />
               </IconButton>
               <IconButton aria-label="Maximieren">
                  <Maximize />
               </IconButton>
               <IconButton aria-label="Schließen">
                  <Close />
               </IconButton>
            </WindowButtons>
         </DialogTitle>
         <DialogNav>
            <DialogAddress $flex="1">
               <Shield />
               <Divider $height={16} />
               <FaLock size={10} />
               <AddressText>
                  https://smart.<b>onoffice.de</b>/smart/gui-handler.php?params=zYLE6zevMJH1X%2B9yNDXYV
               </AddressText>
               <Dots />
            </DialogAddress>
            <MenuWithBadge aria-label="Menü">
               <Hamburger />
               <WarnBadge size={9} $color="#ffbf1f" />
            </MenuWithBadge>
         </DialogNav>
         <DialogMain>
            <DialogForm onSubmit={(e) => e.preventDefault()}>
               <DialogHeading>
                  <h2>CSV Import</h2>
                  <a href="#schliessen">Fenster schließen</a>
               </DialogHeading>
               <Hint>
                  <FaInfoCircle size={12} />
                  <strong>Hier können Sie die Daten für den Import auswählen</strong>
               </Hint>
               <Choices>
                  <legend>Bitte wählen Sie den gewünschten Import aus</legend>
                  {importKinds.map((kind, i) => (
                     <Choice key={kind} $marked={i === 1}>
                        <input type="radio" name="import" />
                        {kind}
                     </Choice>
                  ))}
               </Choices>
               <SubmitButton type="submit">Weiter</SubmitButton>
            </DialogForm>
            <DialogScroll>
               <Chevron up />
               <ScrollThumb />
               <Chevron />
            </DialogScroll>
         </DialogMain>
      </Dialog>
   )
}

function LaptopBase() {
   return (
      <BaseDrawing viewBox="0 0 1970 91" preserveAspectRatio="none" aria-hidden="true">
         <defs>
            <linearGradient id="contact">
               <stop offset="0" stopColor="#000" stopOpacity="0" />
               <stop offset="0.08" stopColor="#000" stopOpacity="0.85" />
               <stop offset="0.92" stopColor="#000" stopOpacity="0.85" />
               <stop offset="1" stopColor="#000" stopOpacity="0" />
            </linearGradient>
            <filter id="soft" x="-20%" y="-100%" width="140%" height="300%">
               <feGaussianBlur stdDeviation="24 2" />
            </filter>
         </defs>
         <path d="M85 31h285v8H85zM1594 31h285v8h-285z" filter="url(#soft)" />
         <path d="M100 38h1764v3H100z" fill="url(#contact)" />
         <path d="M23 11C70 28 180 38 300 38h1362c120 0 230-10 277-27z" fill="#fff" />
         <path d="M23 0h1916v11H23z" fill="#3a3835" />
         <path d="M798 0h366v12c-20 2-40 3-60 3H858c-20 0-40-1-60-3z" fill="#c4c2c9" />
         <path d="M798 0h366v1H798z" fill="#6b5f66" />
         <g fill="#54463c">
            <ellipse cx="211" cy="28" rx="7" ry="1.500" />
            <ellipse cx="745" cy="29" rx="9" ry="1.500" />
            <ellipse cx="1217" cy="29" rx="9" ry="1.500" />
            <ellipse cx="1751" cy="28" rx="7" ry="1.500" />
         </g>
      </BaseDrawing>
   )
}

export default function App() {
   return (
      <Page>
         <GlobalStyle />
         <Lid>
            <Bezel>
               <CameraBar>
                  <Camera />
               </CameraBar>
               <Screen>
                  <BrowserChrome />
                  <AppArea>
                     <Sidebar>
                        {sideItems.map(({ label, Icon, active }) => (
                           <SideLink key={label} href={`#${label}`} $active={active}>
                              <Icon />
                              {label}
                           </SideLink>
                        ))}
                     </Sidebar>
                     <Content>
                        <AppMenu>
                           {["Bearbeiten", "Extras", "Aktionen", "Statistiken", "?"].map((item) => (
                              <MenuButton key={item}>{item}</MenuButton>
                           ))}
                           <MenuEnd>
                              <span>onOffice enterprise edition</span>
                              <LogoutButton>
                                 Can abmelden
                                 <FaPowerOff size={7} />
                              </LogoutButton>
                           </MenuEnd>
                        </AppMenu>
                        <AppToolbar />
                        <ViewTabs>
                           <ViewTab>Aktive Immobilien</ViewTab>
                           <ViewTab $active>
                              Alle Immobilien
                              <Caret />
                           </ViewTab>
                           <ViewTabsEnd>
                              <IconButton aria-label="Neue Ansicht">
                                 <Line w={8} sw={3}>
                                    <path d="M8 0v16M0 8h16" />
                                 </Line>
                              </IconButton>
                           </ViewTabsEnd>
                        </ViewTabs>
                        <ListArea>
                           <TableWrap>
                              <EstateTable />
                           </TableWrap>
                           <ListSide>
                              <ColumnsButton aria-label="Spalten">
                                 <ColumnsIcon />
                              </ColumnsButton>
                              <ScrollTrack>
                                 <Chevron up />
                                 <Chevron />
                              </ScrollTrack>
                           </ListSide>
                        </ListArea>
                        <StatusBar>
                           <span>
                              Status: <b>Alle</b>, Einheiten anzeigen: <b>ja</b>
                           </span>
                           <Pager>
                              <span>0 selektiert / 6 Datensätze</span>
                              <IconButton aria-label="Erste Seite">
                                 <PageArrow back stop />
                              </IconButton>
                              <IconButton aria-label="Vorige Seite">
                                 <PageArrow back />
                              </IconButton>
                              <PagerField>
                                 <input type="text" aria-label="Seite" defaultValue="1" />/ 1
                              </PagerField>
                              <IconButton aria-label="Nächste Seite">
                                 <PageArrow />
                              </IconButton>
                              <IconButton aria-label="Letzte Seite">
                                 <PageArrow stop />
                              </IconButton>
                           </Pager>
                        </StatusBar>
                        <Footer>
                           {footerActions.map((action) => (
                              <FooterButton key={action}>
                                 {action}
                                 <Caret up />
                              </FooterButton>
                           ))}
                        </Footer>
                     </Content>
                  </AppArea>
                  <ImportDialog />
               </Screen>
               <Chin>MacBook</Chin>
            </Bezel>
         </Lid>
         <LaptopBase />
      </Page>
   )
}
